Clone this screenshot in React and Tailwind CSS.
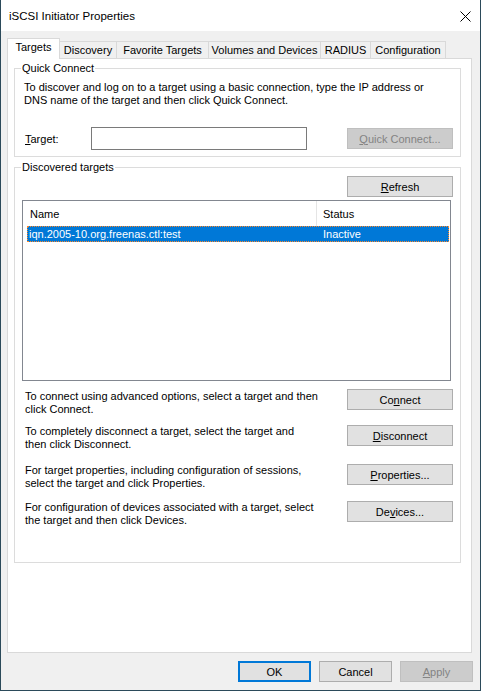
const Btn = ({ children, className = '', disabled = false, primary = false }) => (
  <div
    className={`h-[21px] flex items-center justify-center ${
      disabled
        ? 'bg-[#cccccc] border border-[#bfbfbf] text-[#838383]'
        : primary
        ? 'bg-[#e1e1e1] border-2 border-[#0078d7]'
        : 'bg-[#e1e1e1] border border-[#adadad]'
    } ${className}`}
  >
    <span className="pt-[1px]">{children}</span>
  </div>
);

const Group = ({ label, className = '', children }) => (
  <div className={`relative border border-[#dcdcdc] ${className}`}>
    <span className="absolute left-[6px] -top-[7px] bg-white px-[1px]">{label}</span>
    {children}
  </div>
);

const tabs = [
  { label: 'Discovery', w: 'w-[57px]' },
  { label: 'Favorite Targets', w: 'w-[92px]' },
  { label: 'Volumes and Devices', w: 'w-[112px]' },
  { label: 'RADIUS', w: 'w-[50px]' },
  { label: 'Configuration', w: 'w-[75px]' },
];

const actions = [
  {
    mt: 'mt-[8px]',
    tmt: 'mt-[1px]',
    text: ['To connect using advanced options, select a target and then', 'click Connect.'],
    btn: <>Co<u>n</u>nect</>,
  },
  {
    mt: 'mt-[9px]',
    tmt: 'mt-0',
    text: ['To completely disconnect a target, select the target and', 'then click Disconnect.'],
    btn: <><u>D</u>isconnect</>,
  },
  {
    mt: 'mt-[13px]',
    tmt: 'mt-0',
    text: ['For target properties, including configuration of sessions,', 'select the target and click Properties.'],
    btn: <><u>P</u>roperties...</>,
  },
  {
    mt: 'mt-[11px]',
    tmt: 'mt-0',
    text: ['For configuration of devices associated with a target, select', 'the target and then click Devices.'],
    btn: <>De<u>v</u>ices...</>,
  },
];

export default function App() {
  return (
    <div className="w-[481px] h-[691px] bg-[#f0f0f0] border-l border-r border-b border-[#2b4a5a] font-['Liberation_Sans',Arial,sans-serif] text-[11px] leading-[13px] text-black">
      {/* Title bar */}
      <div className="h-[31px] bg-white flex items-start justify-between">
        <span className="ml-[8px] mt-[10px] text-[11.5px]">iSCSI Initiator Properties</span>
        <svg width="11" height="11" viewBox="0 0 11 11" className="mt-[11px] mr-[9px]">
          <path d="M0.5 0.5L10.5 10.5M10.5 0.5L0.5 10.5" stroke="#000" strokeWidth="1" />
        </svg>
      </div>

      {/* Tabs */}
      <div className="ml-[6px] mt-[7px] h-[20px] flex items-end">
        <div className="relative z-10 w-[53px] h-[21px] -mb-[1px] bg-white border-l border-t border-r border-[#d9d9d9] flex justify-center pt-[2px]">
          Targets
        </div>
        {tabs.map((t) => (
          <div
            key={t.label}
            className={`${t.w} h-[17px] border-t border-r border-[#d9d9d9] flex items-center justify-center`}
          >
            {t.label}
          </div>
        ))}
      </div>

      {/* Panel */}
      <div className="ml-[6px] w-[465px] h-[595px] bg-white border border-[#d9d9d9]">
        <Group label="Quick Connect" className="ml-[6px] mt-[9px] w-[447px] h-[89px]">
          <p className="mt-[12px] pl-[9px]">
            To discover and log on to a target using a basic connection, type the IP address or
            <br />
            DNS name of the target and then click Quick Connect.
          </p>
          <div className="mt-[20px] pl-[10px] flex items-start">
            <span className="w-[66px] mt-[6px]">
              <u>T</u>arget:
            </span>
            <div className="w-[216px] h-[23px] border border-[#7a7a7a] bg-white" />
            <Btn disabled className="ml-[40px] mt-[1px] w-[106px]">
              <u>Q</u>uick Connect...
            </Btn>
          </div>
        </Group>

        <Group
          label={<>Discovered tar<u>g</u>ets</>}
          className="ml-[6px] mt-[10px] w-[447px] h-[396px]"
        >
          <Btn className="ml-[332px] mt-[8px] w-[106px]">
            <u>R</u>efresh
          </Btn>

          {/* List view */}
          <div className="mt-[3px] ml-[7px] w-[429px] h-[181px] border border-[#828790] bg-white">
            <div className="h-[25px] flex">
              <div className="w-[294px] border-r border-[#e5e5e5] pl-[7px] pt-[7px]">Name</div>
              <div className="pl-[6px] pt-[7px]">Status</div>
            </div>
            <div className="ml-[4px] w-[422px] h-[16px] bg-[#0078d7] border border-dotted border-[#ff8728] text-white flex items-center">
              <span className="w-[295px] pl-[1px]">iqn.2005-10.org.freenas.ctl:test</span>
              <span>Inactive</span>
            </div>
          </div>

          {actions.map((a, i) => (
            <div key={i} className={`${a.mt} pl-[10px] flex items-start`}>
              <p className={`w-[322px] ${a.tmt}`}>
                {a.text[0]}
                <br />
                {a.text[1]}
              </p>
              <Btn className="w-[106px]">{a.btn}</Btn>
            </div>
          ))}
        </Group>
      </div>

      {/* Dialog buttons */}
      <div className="mt-[8px] pr-[7px] flex justify-end gap-[8px]">
        <Btn primary className="w-[73px]">OK</Btn>
        <Btn className="w-[73px]">Cancel</Btn>
        <Btn disabled className="w-[73px]">
          <u>A</u>pply
        </Btn>
      </div>
    </div>
  );
}
